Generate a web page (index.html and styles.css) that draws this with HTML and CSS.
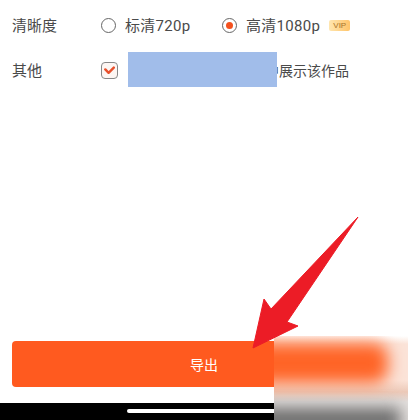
FILE: index.html
```html
<!DOCTYPE html>
<html lang="zh-CN">
<head>
    <meta charset="UTF-8">
    <meta name="viewport" content="width=device-width, initial-scale=1.0">
    <title>导出</title>
    <link rel="stylesheet" href="styles.css">
</head>
<body>
    <div class="settings">
        <div class="row">
            <span class="label">清晰度</span>
            <div class="option option-sd">
                <span class="radio"></span>
                <span>标清720p</span>
            </div>
            <div class="option">
                <span class="radio checked"></span>
                <span>高清1080p</span>
                <span class="vip">VIP</span>
            </div>
        </div>
        <div class="row">
            <span class="label">其他</span>
            <span class="checkbox">
                <svg width="11" height="9" viewBox="0 0 11 9"><path d="M1.3 3.4 L4.6 6.8 L9.8 1.6" fill="none" stroke="#e8502c" stroke-width="2.4" stroke-linecap="round" stroke-linejoin="round"/></svg>
            </span>
            <span class="other-text">中展示该作品</span>
        </div>
    </div>

    <div class="spacer"></div>
    <button class="export">导出</button>
    <div class="home-bar"><span class="pill"></span></div>

    <!-- 遮挡和标注 -->
    <div class="redact"></div>
    <div class="smudge">
        <div class="smudge-orange"></div>
        <div class="smudge-gray"></div>
    </div>
    <svg class="arrow" width="408" height="420" viewBox="0 0 408 420">
        <path d="M358 217 L271 309 L264 299 L253 348 L298 326 L287 322 Z" fill="#ec1c26" stroke="#ec1c26" stroke-width="1" stroke-linejoin="round"/>
    </svg>
</body>
</html>
```

FILE: styles.css
```css
html, body {
    margin: 0;
    padding: 0;
}
body {
    position: relative;
    width: 408px;
    height: 420px;
    overflow: hidden;
    display: flex;
    flex-direction: column;
    background-color: #fff;
    color: #4a4a4a;
    font-family: Roboto, "Noto Sans CJK SC", sans-serif;
    font-size: 15px;
}
.settings {
    padding: 3px 0 0 12px;
}
.row {
    display: flex;
    align-items: center;
    height: 45px;
}
.label {
    width: 89px;
    position: relative;
    top: -1px;
}
.option {
    display: flex;
    align-items: center;
    gap: 9px;
}
.option span:not(.radio):not(.vip) {
    position: relative;
    top: -1px;
    letter-spacing: 0.3px;
}
.option-sd {
    width: 121px;
}
.radio {
    width: 13px;
    height: 13px;
    border: 1px solid #666;
    border-radius: 50%;
    display: flex;
    align-items: center;
    justify-content: center;
}
.radio.checked::after {
    content: "";
    width: 7px;
    height: 7px;
    border-radius: 50%;
    background-color: #f4511e;
}
.vip {
    width: 21px;
    height: 11px;
    border-radius: 2px;
    background: linear-gradient(to right, #ffe6b0, #ffc469);
    color: #a9752a;
    font-family: "Liberation Sans", sans-serif;
    font-size: 8px;
    line-height: 11px;
    text-align: center;
}
.checkbox {
    width: 15px;
    height: 15px;
    border: 1px solid #888;
    border-radius: 4px;
    background-color: #fdf6f3;
    display: flex;
    align-items: center;
    justify-content: center;
}
.other-text {
    margin-left: 147px;
    font-size: 14px;
    position: relative;
    top: -1px;
}
.spacer {
    flex: 1;
}
.export {
    flex: none;
    height: 46px;
    margin: 0 12px;
    border: none;
    border-radius: 4px;
    background-color: #ff5a1f;
    color: #fff;
    font-family: inherit;
    font-size: 14px;
}
.home-bar {
    flex: none;
    height: 17px;
    margin-top: 16px;
    background-color: #000;
    display: flex;
    justify-content: center;
    padding-top: 6px;
    box-sizing: border-box;
}
.pill {
    width: 154px;
    height: 4px;
    border-radius: 2px;
    background-color: #fff;
}
.redact {
    position: absolute;
    left: 128px;
    top: 52px;
    width: 149px;
    height: 35px;
    background-color: #a1bdea;
}
.smudge {
    position: absolute;
    left: 274px;
    top: 336px;
    width: 134px;
    height: 84px;
    overflow: hidden;
    background: linear-gradient(to bottom, #fff 0, #fbe3d8 8px, #fbe3d8 44px, #ecc9b8 56px, #e4e0de 66px);
}
.smudge-orange {
    position: absolute;
    left: -24px;
    top: 7px;
    width: 138px;
    height: 40px;
    border-radius: 14px;
    background-color: #ff6426;
    filter: blur(8px);
}
.smudge-gray {
    position: absolute;
    left: -24px;
    top: 72px;
    width: 150px;
    height: 24px;
    background-color: #6a6a6a;
    filter: blur(8px);
}
.arrow {
    position: absolute;
    left: 0;
    top: 0;
}
```
